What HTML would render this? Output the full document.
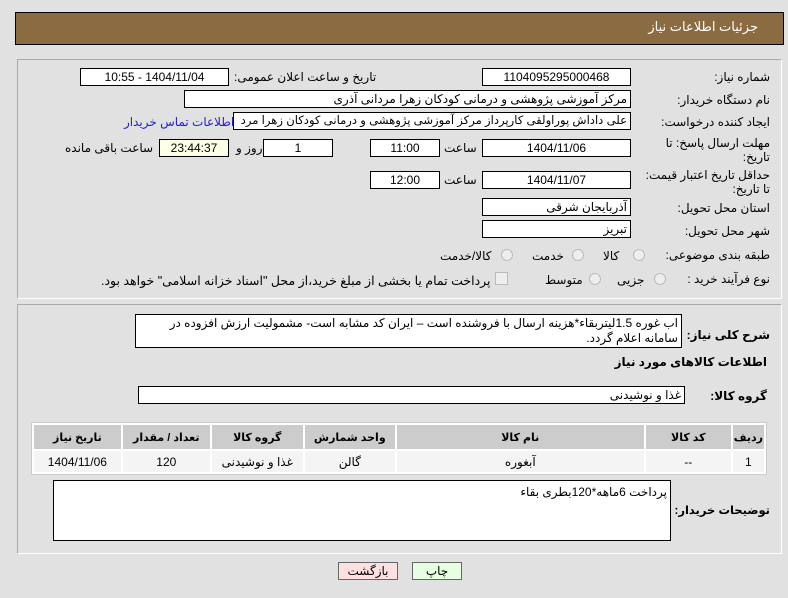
<!DOCTYPE html>
<html><head><meta charset="utf-8"><style>
body{margin:0;width:788px;height:598px;background:#e1e1e1;font-family:"Liberation Sans","DejaVu Sans",sans-serif;font-size:12px;color:#000;position:relative;overflow:hidden;direction:rtl}
.a{position:absolute;white-space:nowrap}
.hdr{left:15px;top:12px;width:767px;height:31px;background:#8b6c42;border:1px solid #000;}
.p{position:absolute;border:1px solid #aaa;border-right-color:#fff;border-bottom-color:#fff;}
.b{position:absolute;background:#fff;border:1px solid #000;box-sizing:border-box;height:18px;line-height:16px;padding:0 3px;font-size:12px;white-space:nowrap;overflow:hidden}
.c{text-align:center}
.l{position:absolute;white-space:nowrap;font-size:12px}
.r{position:absolute;width:12px;height:12px;border-radius:50%;border:1px solid #bbb;background:#eee;box-sizing:border-box}
table{position:absolute;left:31px;top:422px;width:736px;border-collapse:separate;border-spacing:2px;background:#fff;border:1px solid #ccc}
th{background:#ccc;height:22px;font-size:11px;font-weight:bold}
td{background:#f4f4f4;height:19px;text-align:center;font-size:12px}
</style></head><body>
<div class="a hdr"></div>
<div class="a" style="right:30px;top:19px;color:#fff;font-size:13px">جزئیات اطلاعات نیاز</div>
<div class="p" style="left:17px;top:59px;width:763px;height:238px"></div>
<div class="p" style="left:17px;top:304px;width:763px;height:248px"></div>

<div class="l" style="right:18px;top:70px">شماره نیاز:</div>
<div class="b c" style="left:482px;top:68px;width:149px">1104095295000468</div>
<div class="l" style="left:234px;top:70px">تاریخ و ساعت اعلان عمومی:</div>
<div class="b c" style="left:80px;top:68px;width:149px">1404/11/04 - 10:55</div>

<div class="l" style="right:18px;top:93px">نام دستگاه خریدار:</div>
<div class="b" style="left:184px;top:90px;width:447px">مرکز آموزشی پژوهشی و درمانی کودکان زهرا مردانی آذری</div>

<div class="l" style="right:18px;top:115px">ایجاد کننده درخواست:</div>
<div class="b" style="left:233px;top:112px;width:398px;font-size:11.6px">علی داداش پوراولقی کارپرداز مرکز آموزشی پژوهشی و درمانی کودکان زهرا مرد</div>
<div class="l" style="left:124px;top:115px;color:#2222cc">اطلاعات تماس خریدار</div>

<div class="l" style="right:18px;top:136px;line-height:14px">مهلت ارسال پاسخ: تا<br>تاریخ:</div>
<div class="b c" style="left:482px;top:139px;width:149px">1404/11/06</div>
<div class="l" style="left:444px;top:141px">ساعت</div>
<div class="b c" style="left:370px;top:139px;width:70px">11:00</div>
<div class="b c" style="left:263px;top:139px;width:70px">1</div>
<div class="l" style="left:236px;top:141px">روز و</div>
<div class="b c" style="left:159px;top:139px;width:70px;background:#ffffe6">23:44:37</div>
<div class="l" style="left:65px;top:141px">ساعت باقی مانده</div>

<div class="l" style="right:18px;top:168px;line-height:14px">حداقل تاریخ اعتبار قیمت:<br>تا تاریخ:</div>
<div class="b c" style="left:482px;top:171px;width:149px">1404/11/07</div>
<div class="l" style="left:444px;top:173px">ساعت</div>
<div class="b c" style="left:370px;top:171px;width:70px">12:00</div>

<div class="l" style="right:18px;top:201px">استان محل تحویل:</div>
<div class="b" style="left:482px;top:198px;width:149px">آذربایجان شرقی</div>
<div class="l" style="right:18px;top:224px">شهر محل تحویل:</div>
<div class="b" style="left:482px;top:220px;width:149px">تبریز</div>

<div class="l" style="right:18px;top:248px">طبقه بندی موضوعی:</div>
<div class="r" style="left:633px;top:249px"></div><div class="l" style="left:603px;top:249px">کالا</div>
<div class="r" style="left:572px;top:249px"></div><div class="l" style="left:532px;top:249px">خدمت</div>
<div class="r" style="left:501px;top:249px"></div><div class="l" style="left:440px;top:249px">کالا/خدمت</div>

<div class="l" style="right:18px;top:272px">نوع فرآیند خرید :</div>
<div class="r" style="left:654px;top:273px"></div><div class="l" style="left:617px;top:273px">جزیی</div>
<div class="r" style="left:589px;top:273px"></div><div class="l" style="left:545px;top:273px">متوسط</div>
<div class="a" style="left:495px;top:272px;width:11px;height:11px;border:1px solid #bbb;background:#eee"></div>
<div class="l" style="left:101px;top:273px;font-size:12.5px">پرداخت تمام یا بخشی از مبلغ خرید،از محل "اسناد خزانه اسلامی" خواهد بود.</div>

<div class="l" style="right:18px;top:328px;font-weight:bold">شرح کلی نیاز:</div>
<div class="b" style="left:135px;top:314px;width:547px;height:34px;white-space:normal;line-height:15px;padding-top:1px">اب غوره 1.5لیتربقاء*هزینه ارسال با فروشنده است – ایران کد مشابه است- مشمولیت ارزش افزوده در سامانه اعلام گردد.</div>
<div class="l" style="right:21px;top:355px;font-weight:bold">اطلاعات کالاهای مورد نیاز</div>
<div class="l" style="right:21px;top:389px;font-weight:bold">گروه کالا:</div>
<div class="b" style="left:138px;top:386px;width:547px">غذا و نوشیدنی</div>

<table><tr><th style="width:24px">ردیف</th><th style="width:83px">کد کالا</th><th style="width:245px">نام کالا</th><th style="width:88px">واحد شمارش</th><th style="width:89px">گروه کالا</th><th style="width:85px">تعداد / مقدار</th><th>تاریخ نیاز</th></tr>
<tr><td>1</td><td>--</td><td>آبغوره</td><td>گالن</td><td>غذا و نوشیدنی</td><td>120</td><td>1404/11/06</td></tr></table>

<div class="l" style="right:18px;top:503px;font-weight:bold;font-size:11.5px">توضیحات خریدار:</div>
<div class="b" style="left:53px;top:480px;width:618px;height:61px;line-height:22px">پرداخت 6ماهه*120بطری بقاء</div>

<div class="b c" style="left:338px;top:562px;width:60px;background:#ffe0e0;border-color:#666">بازگشت</div>
<div class="b c" style="left:412px;top:562px;width:50px;background:#e6ffe0;border-color:#666">چاپ</div>
</body></html>
